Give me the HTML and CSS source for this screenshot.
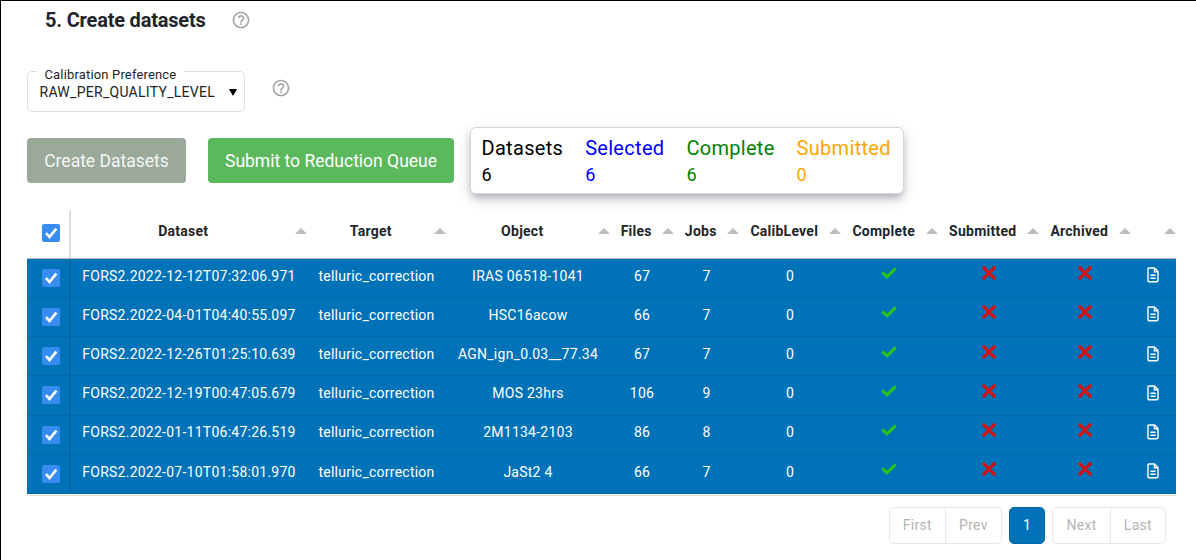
FILE: index.html
```
<!DOCTYPE html>
<html lang="en">
<head>
	<meta charset="utf-8">
	<title>Create datasets</title>
	<link rel="stylesheet" href="styles.css">
</head>
<body>
	<!-- shared icons -->
	<svg class="defs" width="0" height="0">
		<symbol id="help" viewBox="0 0 24 24"><path d="M11 18h2v-2h-2v2zm1-16C6.48 2 2 6.48 2 12s4.48 10 10 10 10-4.48 10-10S17.52 2 12 2zm0 18c-4.41 0-8-3.59-8-8s3.59-8 8-8 8 3.59 8 8-3.59 8-8 8zm0-14c-2.21 0-4 1.79-4 4h2c0-1.1.9-2 2-2s2 .9 2 2c0 2-3 1.75-3 5h2c0-2.25 3-2.5 3-5 0-2.21-1.79-4-4-4z"/></symbol>
		<symbol id="tick" viewBox="0 0 16 12"><path class="tick" d="M1.3 5.3L6 9.8L14.7 1.4"/></symbol>
		<symbol id="cross" viewBox="0 0 14 14"><path class="cross" d="M1.9 1.9L12.1 12.1M12.1 1.9L1.9 12.1"/></symbol>
		<symbol id="doc" viewBox="0 0 12 16"><path class="doc" d="M1.8 1H7.5L11 4.5V13.3Q11 14.8 9.5 14.8H2.5Q1 14.8 1 13.3V1.8Q1 1 1.8 1zM7.4 1V4.8H11M3.4 8.3H8.6M3.4 11.3H8.6"/></symbol>
		<symbol id="box" viewBox="0 0 18 18"><path class="box" d="M4 9.2L7.5 13L14.3 4.6"/></symbol>
	</svg>
	<div class="page">
		<div class="title">
			<h2>5. Create datasets</h2>
			<svg class="help"><use href="#help"/></svg>
		</div>
		<div class="pref">
			<fieldset class="select">
				<legend>Calibration Preference</legend>
				<div class="value">RAW_PER_QUALITY_LEVEL<span class="down"></span></div>
			</fieldset>
			<svg class="help"><use href="#help"/></svg>
		</div>
		<div class="actions">
			<button class="btn disabled">Create Datasets</button>
			<button class="btn submit">Submit to Reduction Queue</button>
			<div class="card">
				<div class="stat"><div class="label">Datasets</div><div>6</div></div>
				<div class="stat blue"><div class="label">Selected</div><div>6</div></div>
				<div class="stat green"><div class="label">Complete</div><div>6</div></div>
				<div class="stat orange"><div class="label">Submitted</div><div>0</div></div>
			</div>
		</div>
		<div class="table">
			<div class="row head">
				<div class="cell check"><svg class="checkbox"><use href="#box"/></svg></div>
				<div class="cell"><span>Dataset</span><i></i></div>
				<div class="cell"><span>Target</span><i></i></div>
				<div class="cell"><span>Object</span><i></i></div>
				<div class="cell"><span>Files</span><i></i></div>
				<div class="cell"><span>Jobs</span><i></i></div>
				<div class="cell"><span>CalibLevel</span><i></i></div>
				<div class="cell"><span>Complete</span><i></i></div>
				<div class="cell"><span>Submitted</span><i></i></div>
				<div class="cell"><span>Archived</span><i></i></div>
				<div class="cell"><span></span><i></i></div>
			</div>
			<div id="rows"></div>
		</div>
		<div class="pages">
			<div class="group"><span>First</span><span>Prev</span></div>
			<div class="group active"><span>1</span></div>
			<div class="group"><span>Next</span><span>Last</span></div>
		</div>
	</div>
	<script src="script.js"></script>
</body>
</html>
```
FILE: styles.css
```
* {
	box-sizing: border-box;
}
body {
	margin: 0;
	height: 560px;
	overflow: hidden;
	background: #fff;
	border-top: 1px solid #000;
	border-left: 1px solid #000;
	color: #212529;
	font: 14px/20px Roboto, sans-serif;
	letter-spacing: 0.25px;
}
.defs {
	display: block;
}
.page {
	padding: 6px 20px 0 26px;
}
.title {
	display: flex;
	align-items: center;
	height: 26px;
	padding-left: 18px;
}
h2 {
	margin: 0;
	width: 186px;
	white-space: nowrap;
	font-size: 20px;
	font-weight: bold;
	letter-spacing: -0.19px;
}
.help {
	width: 20px;
	height: 20px;
	fill: #a5a5a5;
}
.pref {
	display: flex;
	margin-top: 34px;
	height: 45px;
}
.pref .help {
	margin: 11px 0 0 25.5px;
}
.select {
	margin: 0;
	padding: 0 7.5px 0 11.5px;
	width: 218px;
	height: 45px;
	border: 1px solid #ddd;
	border-radius: 5px;
}
legend {
	margin-left: -3px;
	padding: 0 8px;
	height: 8px;
	line-height: 16px;
	font-size: 13px;
	letter-spacing: 0.16px;
}
.value {
	display: flex;
	justify-content: space-between;
	align-items: center;
	margin-top: 7px;
	line-height: 20px;
	letter-spacing: 0.28px;
}
.down {
	border: 4.5px solid transparent;
	border-top: 7px solid #000;
	border-bottom: 0;
}
.actions {
	display: flex;
	margin-top: 15px;
	height: 67px;
}
.btn {
	margin-top: 11px;
	padding: 0;
	height: 45px;
	border: 0;
	border-radius: 4px;
	color: #fff;
	font: 17.5px Roboto, sans-serif;
}
.disabled {
	width: 159px;
	margin-right: 22px;
	background: #9ba99b;
	color: #f5f6f5;
}
.submit {
	width: 246px;
	margin-right: 16px;
	background: #5cb85c;
}
.card {
	display: flex;
	gap: 22px;
	width: 434px;
	height: 67px;
	padding: 7px 10.5px;
	border: 1px solid #d5d5da;
	border-radius: 6px;
	background: #fff;
	box-shadow: 0 5px 8px -2px rgba(0,0,40,.28), 0 5px 16px rgba(0,0,40,.12);
	color: #000;
	font-size: 18px;
	line-height: 28px;
}
.label {
	font-size: 20px;
	line-height: 26px;
	letter-spacing: 0.3px;
}
.blue { color: #00f; }
.green { color: green; }
.orange { color: orange; }

.table {
	margin-top: 16px;
	border-bottom: 1px solid #ddd;
	height: 286px;
}
.row {
	display: grid;
	grid-template-columns: 44px 236px 139px 164px 64px 65px 102px 97px 101px 92px 45px;
	height: 39.17px;
	background: #0072b8;
	color: #fff;
	border-bottom: 1px solid #0067a5;
}
.head {
	height: 49px;
	background: #fff;
	color: #212529;
	border-bottom: 1px solid #bbb;
	font-weight: bold;
}
.cell {
	display: flex;
	justify-content: center;
	padding-top: 6.8px;
	white-space: nowrap;
}
.head .cell {
	align-items: center;
	padding-top: 0;
	padding-bottom: 6px;
}
.head span {
	flex: 1;
	padding-left: 0.5px;
	text-align: center;
}
.head i {
	border: 6px solid transparent;
	border-bottom-color: #bbb;
	border-top: 0;
}
.check {
	padding-top: 10px;
	padding-left: 6px;
	border-right: 2px solid #0067a5;
}
.head .check {
	border-color: #ddd;
	padding-bottom: 2px;
}
.checkbox {
	width: 18px;
	height: 18px;
	border-radius: 2px;
	background: #378def;
}
.box {
	fill: none;
	stroke: #fff;
	stroke-width: 2.6;
}
.i-tick {
	width: 16px;
	height: 12px;
	margin: 1.4px 1px 0 0;
}
.tick {
	fill: none;
	stroke: #26c41c;
	stroke-width: 3;
}
.i-cross {
	width: 14px;
	height: 14px;
	margin-top: 0.5px;
}
.cross {
	stroke: #ce1515;
	stroke-width: 3.4;
	stroke-linecap: round;
}
.i-doc {
	width: 12px;
	height: 16px;
	margin: 1.5px 1px 0 0;
}
.doc {
	fill: none;
	stroke: #fff;
	stroke-width: 1.4;
}
.pages {
	display: flex;
	gap: 7px;
	justify-content: flex-end;
	margin: 11px 10px 0 0;
	line-height: 35px;
	color: #b5b5b5;
}
.group {
	display: flex;
	height: 37px;
	border: 1px solid #e8e8e8;
	border-radius: 5px;
}
.group span {
	padding: 0 13.2px;
}
.group span + span {
	border-left: 1px solid #e8e8e8;
}
.group.active {
	background: #0072b8;
	border-color: #0067a5;
	color: #fff;
}
```
FILE: script.js
```
var data = [
	["FORS2.2022-12-12T07:32:06.971", "IRAS 06518-1041", 67, 7],
	["FORS2.2022-04-01T04:40:55.097", "HSC16acow", 66, 7],
	["FORS2.2022-12-26T01:25:10.639", "AGN_ign_0.03__77.34", 67, 7],
	["FORS2.2022-12-19T00:47:05.679", "MOS 23hrs", 106, 9],
	["FORS2.2022-01-11T06:47:26.519", "2M1134-2103", 86, 8],
	["FORS2.2022-07-10T01:58:01.970", "JaSt2 4", 66, 7]
];
var icon = function (name) {
	return '<svg class="i-' + name + '"><use href="#' + name + '"/></svg>';
};
var html = "";
data.forEach(function (d) {
	var cells = [d[0], "telluric_correction", d[1], d[2], d[3], 0,
		icon("tick"), icon("cross"), icon("cross"), icon("doc")];
	html += '<div class="row"><div class="cell check"><svg class="checkbox"><use href="#box"/></svg></div>';
	cells.forEach(function (c) {
		html += '<div class="cell">' + c + '</div>';
	});
	html += '</div>';
});
document.getElementById("rows").innerHTML = html;
```
